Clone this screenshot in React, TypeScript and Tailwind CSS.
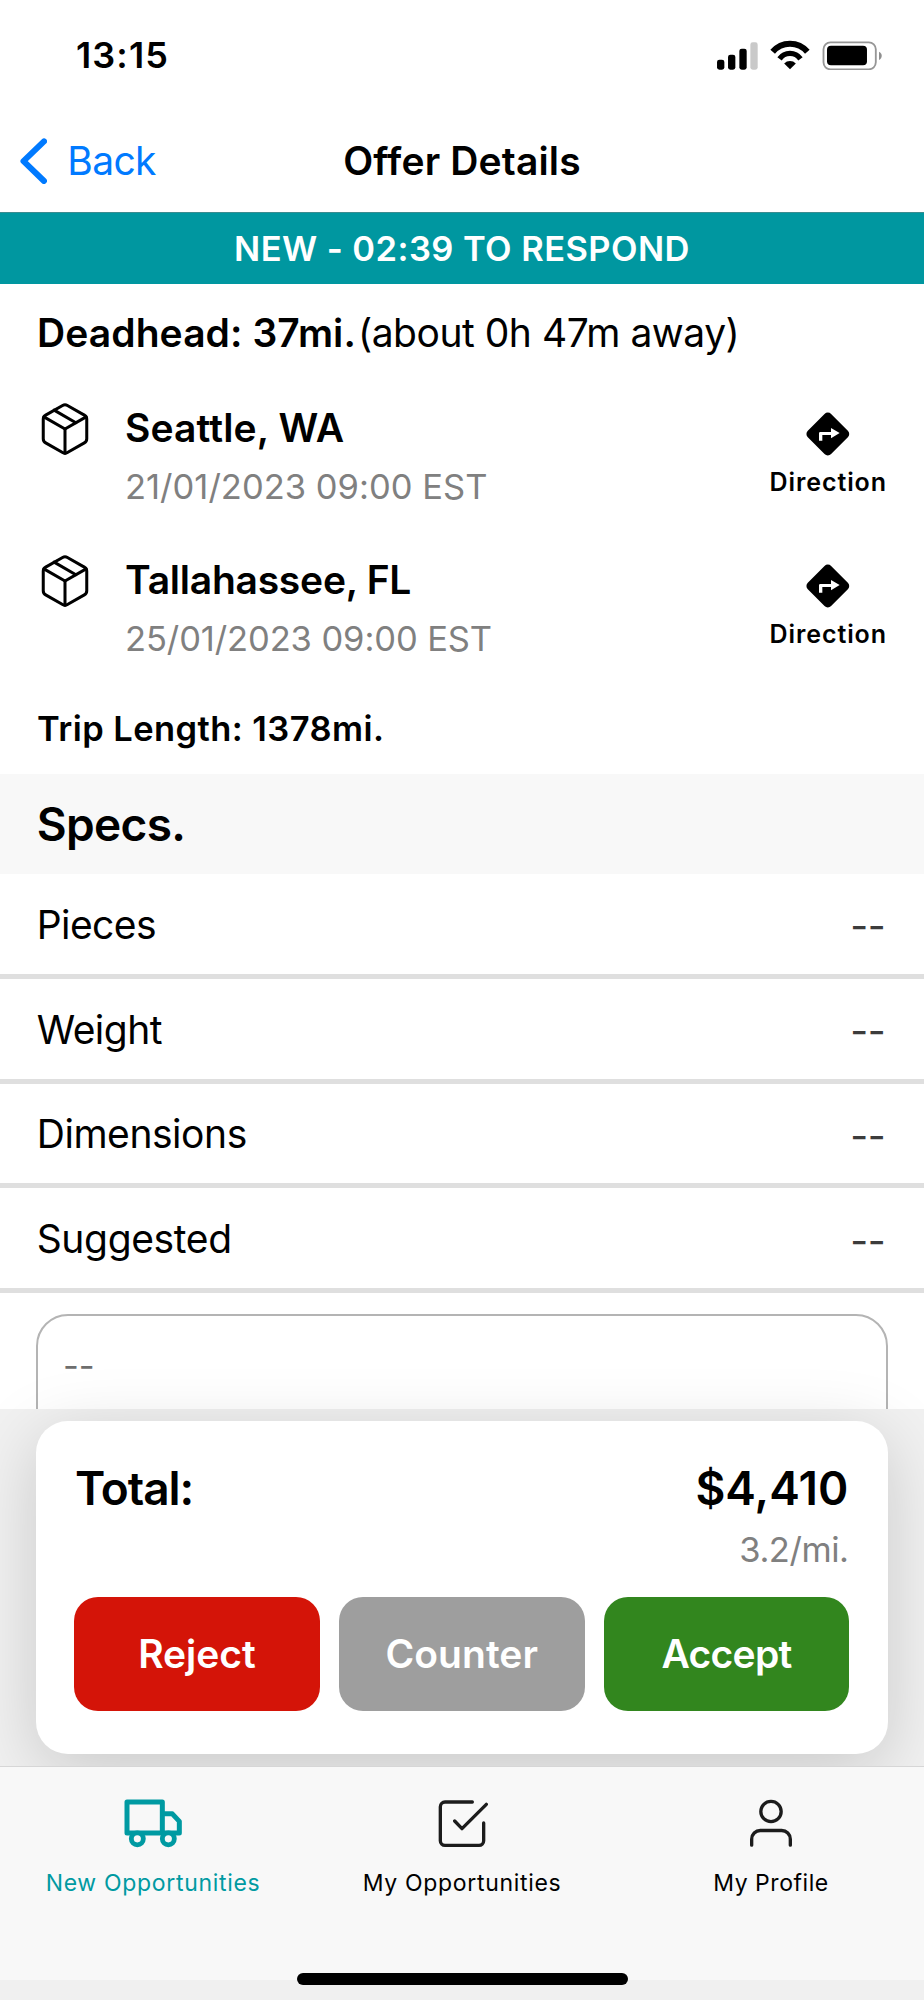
import { ReactNode } from "react";

interface Stop {
  city: string;
  date: string;
  cityClass: string;
  dateClass: string;
}

const stops: Stop[] = [
  {
    city: "Seattle, WA",
    date: "21/01/2023 09:00 EST",
    cityClass: "tracking-[0.12px]",
    dateClass: "tracking-[0.02px]",
  },
  {
    city: "Tallahassee, FL",
    date: "25/01/2023 09:00 EST",
    cityClass: "tracking-[-0.24px]",
    dateClass: "tracking-[-0.1px]",
  },
];

const specs = [
  { label: "Pieces", className: "tracking-[-0.56px]" },
  { label: "Weight", className: "tracking-[-0.5px]" },
  { label: "Dimensions", className: "tracking-[-0.45px]" },
  { label: "Suggested", className: "tracking-[-0.35px]" },
];

function StatusIcons() {
  return (
    <svg width="165" height="30.67" viewBox="765 117 495 92" fill="none">
      <rect x="765" y="176" width="22" height="30" rx="7" fill="#000" />
      <rect x="798" y="161" width="22" height="45" rx="7" fill="#000" />
      <rect x="832" y="143" width="22" height="63" rx="7" fill="#000" />
      <rect x="865" y="124" width="22" height="82" rx="7" fill="#c9c9c9" />
      <path d="M932 152.3A68 68 0 0 1 1036 152.3" stroke="#000" strokeWidth="18" />
      <path d="M952.6 173.6A38.5 38.5 0 0 1 1015.4 173.6" stroke="#000" strokeWidth="16" />
      <path d="M966.5 187.5A24.5 24.5 0 0 1 1001.5 187.5L984 205Z" fill="#000" />
      <rect x="1084.500" y="124" width="157" height="81" rx="21" stroke="#969696" strokeWidth="5.500" />
      <rect x="1095" y="134" width="120" height="59" rx="12" fill="#000" />
      <path d="M1251 152C1262 157 1262 171 1251 177Z" fill="#8f8f8f" />
    </svg>
  );
}

function BackIcon() {
  return (
    <svg width="27.33" height="46" viewBox="60 411 82 138" fill="none">
      <path
        d="M132 421L70.500 480.500L132 540"
        stroke="#007aff"
        strokeWidth="18"
        strokeLinecap="round"
        strokeLinejoin="round"
      />
    </svg>
  );
}

function BoxIcon() {
  return (
    <svg
      className="shrink-0"
      width="58"
      height="58"
      viewBox="0 0 24 24"
      fill="none"
      stroke="#000"
      strokeWidth="1.25"
      strokeLinecap="round"
      strokeLinejoin="round"
    >
      <path d="M16.500 9.400L7.500 4.210" />
      <path d="M21 16V8a2 2 0 0 0-1-1.730l-7-4a2 2 0 0 0-2 0l-7 4A2 2 0 0 0 3 8v8a2 2 0 0 0 1 1.730l7 4a2 2 0 0 0 2 0l7-4A2 2 0 0 0 21 16z" />
      <path d="M3.270 6.960L12 12.010l8.730-5.050" />
      <path d="M12 22.080V12" />
    </svg>
  );
}

function DirectionIcon() {
  return (
    <svg width="43.67" height="44" viewBox="0 0 131 132">
      <rect x="16" y="16.500" width="99" height="99" rx="14" fill="#000" transform="rotate(45 65.500 66)" />
      <path d="M39 86V64a4 4 0 0 1 4-4H75V48L101 63L75 79V69H49V86Z" fill="#fff" />
    </svg>
  );
}

function TruckIcon() {
  return (
    <svg width="58" height="49" viewBox="372 146 174 147" fill="none" stroke="#009aa2" strokeWidth="15" strokeLinejoin="round">
      <path d="M381 155H487V248H381Z" />
      <path d="M487 190.500H517L538 213V248H487" />
      <circle cx="412" cy="265.500" r="18" fill="#f8f8f8" strokeWidth="14.500" />
      <circle cx="505" cy="265.500" r="18" fill="#f8f8f8" strokeWidth="14.500" />
    </svg>
  );
}

function CheckIcon() {
  return (
    <svg
      className="ml-[2px]"
      width="50"
      height="49"
      viewBox="39 40 150 147"
      fill="none"
      stroke="#1c1c1c"
      strokeWidth="10"
      strokeLinecap="round"
      strokeLinejoin="round"
    >
      <path d="M142 49H60A14 14 0 0 0 46 63V165A14 14 0 0 0 60 179H162A14 14 0 0 0 176 165V112" />
      <path d="M89 106L111 129L184 56" />
    </svg>
  );
}

function ProfileIcon() {
  return (
    <svg width="44" height="49" viewBox="861.500 145.500 132 147" fill="none" stroke="#1c1c1c" strokeWidth="10" strokeLinecap="round">
      <circle cx="927.500" cy="183" r="30.500" />
      <path d="M869.500 284V266A26 26 0 0 1 895.500 240H959.500A26 26 0 0 1 985.500 266V284" />
    </svg>
  );
}

function StopRow({ stop }: { stop: Stop }) {
  return (
    <div className="flex h-[152.3px] pr-[37px] pl-[36px]">
      <div className="pt-5">
        <BoxIcon />
      </div>
      <div className="ml-[31px] flex-1 pt-6">
        <h3 className={`text-[39px] leading-[48px] font-semibold ${stop.cityClass}`}>{stop.city}</h3>
        <p className={`mt-[14px] text-[34.5px] leading-[42px] text-[#808080] ${stop.dateClass}`}>{stop.date}</p>
      </div>
      <button className="flex flex-col items-center pt-8">
        <DirectionIcon />
        <span className="mt-[10px] text-[25px] leading-[32px] font-semibold tracking-[0.93px]">Direction</span>
      </button>
    </div>
  );
}

function ActionButton({ className, children }: { className: string; children: ReactNode }) {
  return (
    <button className={`h-[114px] rounded-[24px] text-[39px] leading-[48px] font-semibold text-white ${className}`}>
      {children}
    </button>
  );
}

function Tab({ icon, label, className = "" }: { icon: ReactNode; label: string; className?: string }) {
  return (
    <button className={`flex flex-col items-center pt-8 ${className}`}>
      {icon}
      <span className="mt-[21px] text-[23px] leading-[28px]">{label}</span>
    </button>
  );
}

export default function App() {
  return (
    <div className="flex h-[2000px] w-[924px] flex-col overflow-hidden bg-white font-['Inter','Liberation_Sans',sans-serif] text-black">
      {/* Status bar */}
      <div className="flex h-[110px] shrink-0 items-center justify-between pr-[42px] pl-[76px]">
        <span className="text-[36px] leading-[44px] font-semibold tracking-[1.1px]">13:15</span>
        <StatusIcons />
      </div>

      {/* Header */}
      <header className="grid h-[102px] shrink-0 grid-cols-[1fr_auto_1fr] items-center">
        <button className="flex items-center gap-5 pl-5 text-[39px] leading-[48px] tracking-[-0.67px] text-[#007aff]">
          <BackIcon />
          Back
        </button>
        <h1 className="text-[39px] leading-[48px] font-semibold tracking-[0.16px]">Offer Details</h1>
      </header>

      <div className="flex h-[72px] shrink-0 items-center justify-center border-t border-[#3b8c90] bg-[#0097a0] text-[34.5px] font-semibold tracking-[0.44px] text-white">
        NEW - 02:39 TO RESPOND
      </div>

      <main className="h-[1125px] shrink-0 overflow-hidden">
        <p className="mb-[23px] pt-[25px] pl-[37px] text-[39px] leading-[48px] whitespace-nowrap">
          <span className="font-semibold tracking-[0.08px]">Deadhead: 37mi.</span>
          <span className="ml-[2px] tracking-[-0.48px]">(about 0h 47m away)</span>
        </p>

        {stops.map((stop) => (
          <StopRow key={stop.city} stop={stop} />
        ))}

        <p className="flex h-[89.4px] items-center pl-[37px] text-[34.5px] font-semibold tracking-[0.43px]">
          Trip Length: 1378mi.
        </p>

        <h2 className="flex h-[100px] items-center bg-[#f8f8f8] pt-[2px] pl-[36.7px] text-[46px] font-semibold tracking-[-0.66px]">
          Specs.
        </h2>

        {specs.map((spec) => (
          <div
            key={spec.label}
            className="flex h-[104.8px] items-center justify-between border-b-[5px] border-[#dfdfdf] pt-[2px] pr-[38.5px] pl-[36.7px] text-[39px] leading-[48px]"
          >
            <span className={spec.className}>{spec.label}</span>
            <span className="pt-[3px] tracking-[-0.3px] text-[#3c3c3c]">--</span>
          </div>
        ))}

        {/* Note */}
        <div className="mx-[36px] mt-[21px] h-[160px] rounded-[32px] border-2 border-[#b4b4b4] pt-[29px] pl-[25px] text-[34.5px] leading-[42px] text-[#6e6e6e]">
          --
        </div>
      </main>

      {/* Total */}
      <section className="relative h-[357px] shrink-0 bg-[#f1f1f1] px-[36.5px] pt-3">
        <div className="-ml-[0.5px] flex h-[333px] flex-col rounded-[32px] bg-white px-[38px] pt-[39px] shadow-[0_16px_70px_rgba(0,0,0,0.17)]">
          <div className="flex justify-between pr-[1px] pl-[1px]">
            <span className="text-[46px] leading-[56px] font-semibold tracking-[-1.04px]">Total:</span>
            <div className="text-right">
              <p className="text-[46px] leading-[56px] font-semibold tracking-[0.08px]">$4,410</p>
              <p className="mt-[13px] text-[34.5px] leading-[42px] tracking-[-0.47px] text-[#808080]">3.2/mi.</p>
            </div>
          </div>
          <div className="mt-[26px] grid grid-cols-3 gap-[19px]">
            <ActionButton className="bg-[#d41408] tracking-[-0.06px]">Reject</ActionButton>
            <ActionButton className="bg-[#9e9e9e] tracking-[0.05px]">Counter</ActionButton>
            <ActionButton className="bg-[#32861e] tracking-[-0.72px]">Accept</ActionButton>
          </div>
        </div>
      </section>

      {/* Tab bar */}
      <nav className="relative flex h-[214px] shrink-0 flex-col border-t border-[#d6d6d6] bg-[#f8f8f8]">
        <div className="-mx-[1.5px] grid grid-cols-3">
          <Tab icon={<TruckIcon />} label="New Opportunities" className="tracking-[0.68px] text-[#009aa2]" />
          <Tab icon={<CheckIcon />} label="My Opportunities" className="tracking-[0.68px]" />
          <Tab icon={<ProfileIcon />} label="My Profile" className="tracking-[0.55px]" />
        </div>
        <div className="absolute top-[206px] left-[297px] h-3 w-[330.5px] rounded-full bg-black" />
      </nav>
      <div className="h-5 shrink-0 bg-[#f0f0f0]" />
    </div>
  );
}
